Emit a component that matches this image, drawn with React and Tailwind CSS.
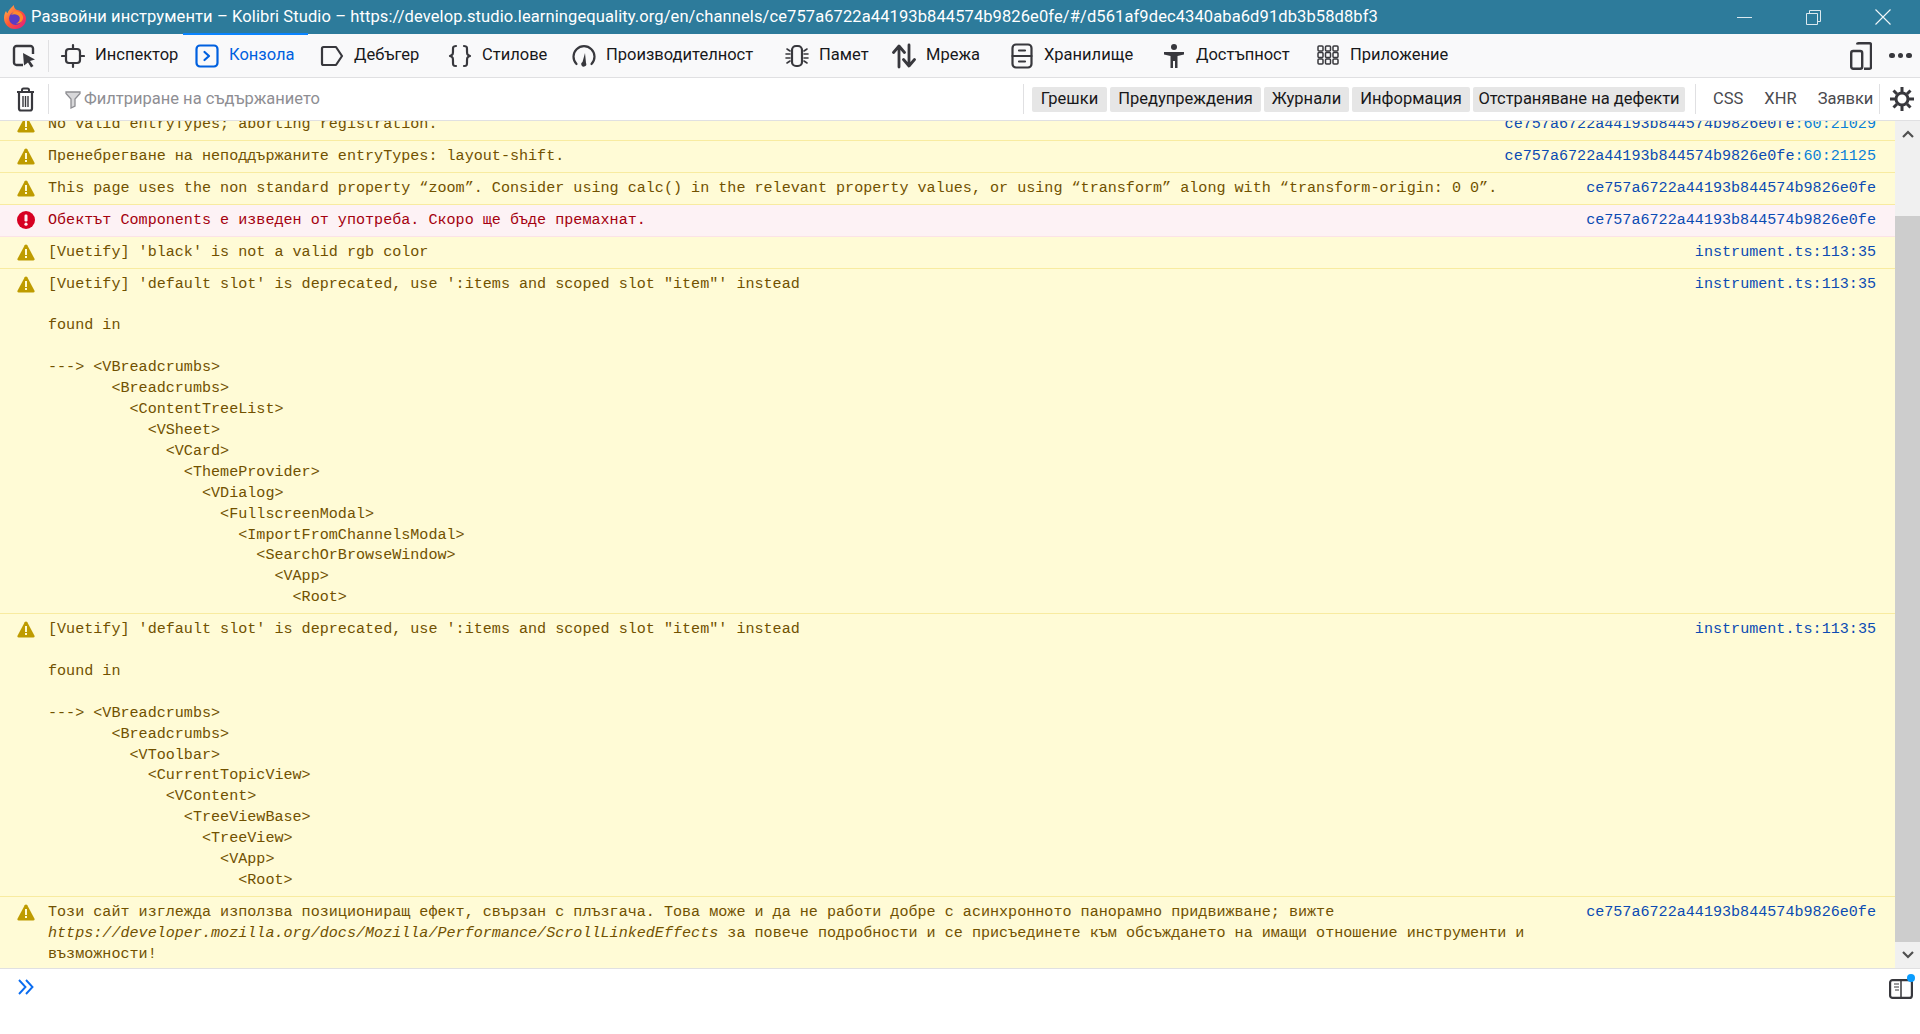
const ui = { fontFamily: 'Roboto, "Noto Sans", sans-serif' }

const tabs = [
  { name: 'Инспектор', icon: 'inspector', w: 'w-[134px]' },
  { name: 'Конзола', icon: 'console', w: 'w-[125px]', active: true },
  { name: 'Дебъгер', icon: 'debugger', w: 'w-[128px]' },
  { name: 'Стилове', icon: 'styles', w: 'w-[124px]' },
  { name: 'Производителност', icon: 'perf', w: 'w-[213px]' },
  { name: 'Памет', icon: 'memory', w: 'w-[107px]' },
  { name: 'Мрежа', icon: 'network', w: 'w-[118px]' },
  { name: 'Хранилище', icon: 'storage', w: 'w-[152px]' },
  { name: 'Достъпност', icon: 'access', w: 'w-[154px]' },
  { name: 'Приложение', icon: 'apps', w: 'w-[163px]' },
]

const levels = [
  { name: 'Грешки', w: 'w-[75px]' },
  { name: 'Предупреждения', w: 'w-[151px]' },
  { name: 'Журнали', w: 'w-[85px]' },
  { name: 'Информация', w: 'w-[118px]' },
  { name: 'Отстраняване на дефекти', w: 'w-[212px]' },
]

const hash = 'ce757a6722a44193b844574b9826e0fe'

const tree1 = `

found in

---> <VBreadcrumbs>
       <Breadcrumbs>
         <ContentTreeList>
           <VSheet>
             <VCard>
               <ThemeProvider>
                 <VDialog>
                   <FullscreenModal>
                     <ImportFromChannelsModal>
                       <SearchOrBrowseWindow>
                         <VApp>
                           <Root>`

const tree2 = `

found in

---> <VBreadcrumbs>
       <Breadcrumbs>
         <VToolbar>
           <CurrentTopicView>
             <VContent>
               <TreeViewBase>
                 <TreeView>
                   <VApp>
                     <Root>`

function TabIcon({ type, color }) {
  const p = { fill: 'none', stroke: color, strokeWidth: 2.2, strokeLinecap: 'round', strokeLinejoin: 'round' }
  return (
    <svg width="24" height="26" viewBox="0 0 24 26" className="shrink-0">
      {type === 'inspector' && (
        <g {...p}>
          <rect x="5" y="6" width="14" height="14" rx="3" />
          <path d="M12 2v4M12 20v4M1 13h4M19 13h4" />
        </g>
      )}
      {type === 'console' && (
        <g {...p}>
          <rect x="1.5" y="2.5" width="21" height="21" rx="3.5" />
          <path d="M9.5 9l4.5 4-4.5 4" />
        </g>
      )}
      {type === 'debugger' && <path {...p} d="M2 5.5a1.5 1.5 0 0 1 1.5-1.5h12.5l6 9-6 9H3.500a1.500 1.500 0 0 1-1.500-1.500z" />}
      {type === 'styles' && (
        <g {...p}>
          <path d="M8 3c-3.500 0-3 2-3 5s0 4-3 5c3 1 3 2 3 5s-.5 5 3 5" />
          <path d="M16 3c3.500 0 3 2 3 5s0 4 3 5c-3 1-3 2-3 5s.5 5-3 5" />
        </g>
      )}
      {type === 'perf' && (
        <g>
          <path {...p} d="M4.500 21a10.500 10.500 0 1 1 15 0" />
          <path d="M13 10l1 10a2.500 2.500 0 1 1-3.500-1z" fill={color} />
        </g>
      )}
      {type === 'memory' && (
        <g {...p}>
          <rect x="7" y="3" width="10" height="20" rx="4" />
          <path strokeWidth="1.600" d="M2 6l3 2M1 11h4M1 15h4M2 20l3-2M22 6l-3 2M23 11h-4M23 15h-4M22 20l-3-2" />
        </g>
      )}
      {type === 'network' && (
        <g {...p} strokeWidth="2.800">
          <path d="M7 24V4M1.500 9.500L7 3l5.500 6.500" />
          <path d="M17 2v20M11.500 16.500L17 23l5.500-6.500" />
        </g>
      )}
      {type === 'storage' && (
        <g {...p}>
          <rect x="2.500" y="1.500" width="19" height="23" rx="3.500" />
          <path d="M2.500 13h19M9 7.500h6M9 18.500h6" />
        </g>
      )}
      {type === 'access' && (
        <g fill={color}>
          <circle cx="12" cy="4" r="3" />
          <path d="M2 9h20v2.600l-6.500 1.400V25h-2.500v-7h-2v7H8.500V13L2 11.600z" />
        </g>
      )}
      {type === 'apps' && (
        <g fill="none" stroke={color} strokeWidth="1.500">
          {[3, 9.500, 16].map((y) =>
            [2, 9.500, 17].map((x) => <rect key={`${x}-${y}`} x={x} y={y} width="5" height="5" rx="1" />),
          )}
        </g>
      )}
    </svg>
  )
}

function FirefoxLogo() {
  return (
    <svg width="24" height="26" viewBox="0 0 24 26" className="shrink-0">
      <defs>
        <linearGradient id="ffo" x1="0" y1="0" x2="1" y2="1">
          <stop offset="0" stopColor="#ffbd4f" />
          <stop offset="0.5" stopColor="#ff5634" />
          <stop offset="1" stopColor="#e31587" />
        </linearGradient>
      </defs>
      <path d="M12 25C5.500 25 1 20 1 14c0-3 1-5.500 2-7 .3 1 .8 1.800 1.400 2.300C5.500 6 8 4 11 1c-.3 2.500 1 4 3 5 4 .5 9 3.500 9 8.500C23 20.500 18.500 25 12 25z" fill="url(#ffo)" />
      <circle cx="12.500" cy="14.500" r="6.500" fill="#5b3bc4" />
      <path d="M8 11c3-1.500 7-1 8.500 2 1 3-1 6-4 6.500 5 .5 8-3 7.500-7-.8-3.500-5-6-9-5z" fill="#ff8a2b" />
    </svg>
  )
}

function WarnIcon() {
  return (
    <svg width="18" height="18" viewBox="0 0 18 18" className="shrink-0">
      <path d="M9 1.500c.6 0 1 .3 1.300.8l7.200 13.500c.4.8-.1 1.700-1.100 1.700H1.600c-1 0-1.500-.9-1.100-1.700L7.700 2.300c.3-.5.7-.8 1.300-.8z" fill="#be9b00" />
      <rect x="8" y="6" width="2" height="6" fill="#fffbd6" />
      <rect x="8" y="13" width="2" height="2" fill="#fffbd6" />
    </svg>
  )
}

function ErrorIcon() {
  return (
    <svg width="18" height="18" viewBox="0 0 18 18" className="shrink-0">
      <circle cx="9" cy="9" r="9" fill="#d70022" />
      <rect x="7.500" y="3.500" width="3" height="7" rx="1.200" fill="#fdf2f5" />
      <circle cx="9" cy="13.200" r="1.600" fill="#fdf2f5" />
    </svg>
  )
}

function Source({ file, line }) {
  return (
    <span className="shrink-0 pl-[16px] text-[#0b4bb3]">
      {file}
      {line && <span className="text-[#0a7fd8]">{line}</span>}
    </span>
  )
}

function Row({ kind = 'warn', file, line, children }) {
  const error = kind === 'error'
  return (
    <div
      className={`flex pl-[17px] pr-[19px] py-[5px] border-b ${
        error ? 'bg-[#fdf2f5] border-[#fbe3e7] text-[#a4000f]' : 'bg-[#fffbd6] border-[#f8eba0] text-[#715100]'
      }`}
    >
      <div className="w-[31px] h-[20.5px] shrink-0 flex items-center">{error ? <ErrorIcon /> : <WarnIcon />}</div>
      <div className="flex-1 whitespace-pre min-w-0">{children}</div>
      <Source file={file} line={line} />
    </div>
  )
}

export default function App() {
  return (
    <div className="h-[1034px] w-[1920px] flex flex-col overflow-hidden bg-white text-[#18181a]" style={ui}>
      {/* window title */}
      <div className="h-[34px] shrink-0 bg-[#2d7b9b] flex items-center pl-[3px] text-white">
        <FirefoxLogo />
        <span className="ml-[4px] text-[16.5px] flex-1 whitespace-nowrap tracking-[0.1px]">
          Развойни инструменти – Kolibri Studio – https://develop.studio.learningequality.org/en/channels/{hash}/#/d561af9dec4340aba6d91db3b58d8bf3
        </span>
        <div className="flex items-center pr-[29px] gap-[54px]">
          <span className="block w-[15px] h-px bg-[#dce9ef]" />
          <svg width="15" height="15" viewBox="0 0 15 15" fill="none" stroke="#dce9ef">
            <path d="M.5 3.500h11v11H.5zM3.500 3.500v-3h11v11h-3" />
          </svg>
          <svg width="16" height="16" viewBox="0 0 16 16" stroke="#f2f7f9" strokeWidth="1.100">
            <path d="M.5.5l15 15M15.500.5l-15 15" />
          </svg>
        </div>
      </div>

      {/* tool tabs */}
      <div className="h-[44px] shrink-0 bg-[#f9f9fa] border-b border-[#e0e0e2] flex items-center text-[16.500px]">
        <div className="w-[49px] h-[32px] border-r border-[#e0e0e2] flex items-center pl-[12px]">
          <svg width="25" height="24" viewBox="0 0 25 24" fill="none">
            <path d="M11 21H4.500A2.500 2.500 0 0 1 2 18.500v-14A2.500 2.500 0 0 1 4.500 2h14A2.500 2.500 0 0 1 21 4.500V10" stroke="#38383d" strokeWidth="2.400" />
            <path d="M11 9l12 6.500-5 1.500 3.500 5-2.500 1.500-3-5-4 3z" fill="#38383d" />
          </svg>
        </div>
        {tabs.map((t) => (
          <div key={t.name} className={`relative h-full flex items-center gap-[10px] pl-[12px] ${t.w} ${t.active ? 'text-[#0060df]' : ''}`}>
            {t.active && <span className="absolute left-0 right-0 -top-px h-[2px] bg-[#0a84ff]" />}
            <TabIcon type={t.icon} color={t.active ? '#0060df' : '#38383d'} />
            <span className="whitespace-nowrap">{t.name}</span>
          </div>
        ))}
        <div className="ml-auto flex items-center pr-[8px] gap-[17px]">
          <svg width="22" height="28" viewBox="0 0 22 28" fill="none" stroke="#38383d" strokeWidth="2.400">
            <path d="M7 2.500a1.500 1.500 0 0 1 1.500-1.300h11a1.500 1.500 0 0 1 1.500 1.500v22.500a1.500 1.500 0 0 1-1.500 1.500H14" />
            <rect x="1.200" y="9" width="11" height="17.800" rx="2" />
          </svg>
          <span className="flex gap-[3px] w-[23px]">
            <i className="block w-[5.500px] h-[5.500px] rounded-full bg-[#38383d]" />
            <i className="block w-[5.500px] h-[5.500px] rounded-full bg-[#38383d]" />
            <i className="block w-[5.500px] h-[5.500px] rounded-full bg-[#38383d]" />
          </span>
        </div>
      </div>

      {/* filter bar */}
      <div className="h-[43px] shrink-0 border-b border-[#e0e0e2] flex items-center text-[16.500px]">
        <div className="w-[49px] h-[30px] border-r border-[#e0e0e2] flex items-center pl-[16px]">
          <svg width="19" height="25" viewBox="0 0 19 25" fill="none" stroke="#38383d" strokeWidth="2">
            <path d="M1 5h17M6 4.500V3a1.500 1.500 0 0 1 1.500-1.500h4A1.500 1.500 0 0 1 13 3v1.500" />
            <path d="M3 5h13v16.500a2 2 0 0 1-2 2H5a2 2 0 0 1-2-2z" strokeWidth="2.200" />
            <path d="M7 9v11M9.500 9v11M12 9v11" strokeWidth="1.400" />
          </svg>
        </div>
        <div className="flex-1 flex items-center pl-[16px] gap-[3px] text-[#8e8e93]">
          <svg width="16" height="19" viewBox="0 0 16 19" fill="none" stroke="#8e8e93" strokeWidth="1.300">
            <path d="M1 2h14v1.500L10 9v7l-4 2V9L1 3.500z" fill="#d8d8da" />
          </svg>
          <span>Филтриране на съдържанието</span>
        </div>
        <div className="h-[30px] border-l border-[#e0e0e2] pl-[8px] pr-[10px] flex items-center gap-[3px] text-[#18181a]">
          {levels.map((l) => (
            <span key={l.name} className={`h-[25px] ${l.w} rounded-[2px] bg-[#e6e6e6] flex items-center justify-center whitespace-nowrap`}>
              {l.name}
            </span>
          ))}
        </div>
        <div className="h-[30px] border-l border-[#e0e0e2] w-[184px] flex items-center pl-[17px] gap-[21px] text-[#4a4a4f]">
          <span>CSS</span>
          <span>XHR</span>
          <span>Заявки</span>
        </div>
        <div className="h-[30px] w-[41px] border-l border-[#e0e0e2] flex items-center pl-[10px]">
          <svg width="24" height="24" viewBox="0 0 24 24" fill="none" stroke="#38383d">
            <circle cx="12" cy="12" r="6" strokeWidth="3" />
            <path strokeWidth="3" d="M12 0v5M12 19v5M0 12h5M19 12h5M3.500 3.500L7 7M17 17l3.500 3.500M20.500 3.500L17 7M7 17l-3.500 3.500" />
          </svg>
        </div>
      </div>

      {/* messages */}
      <div className="h-[848px] shrink-0 flex border-b border-[#e0e0e2]">
        <div
          className="flex-1 min-w-0 overflow-hidden bg-[#fffbd6] text-[15.100px] leading-[20.900px]"
          style={{ fontFamily: '"Liberation Mono", "DejaVu Sans Mono", monospace' }}
        >
          <div className="h-[20px] overflow-hidden flex flex-col justify-end">
            <Row file={hash} line=":60:21029">No valid entryTypes; aborting registration.</Row>
          </div>
          <Row file={hash} line=":60:21125">Пренебрегване на неподдържаните entryTypes: layout-shift.</Row>
          <Row file={hash}>This page uses the non standard property “zoom”. Consider using calc() in the relevant property values, or using “transform” along with “transform-origin: 0 0”.</Row>
          <Row kind="error" file={hash}>Обектът Components е изведен от употреба. Скоро ще бъде премахнат.</Row>
          <Row file="instrument.ts:113:35">[Vuetify] 'black' is not a valid rgb color</Row>
          <Row file="instrument.ts:113:35">{`[Vuetify] 'default slot' is deprecated, use ':items and scoped slot "item"' instead${tree1}`}</Row>
          <Row file="instrument.ts:113:35">{`[Vuetify] 'default slot' is deprecated, use ':items and scoped slot "item"' instead${tree2}`}</Row>
          <Row file={hash}>
            {'Този сайт изглежда използва позициониращ ефект, свързан с плъзгача. Това може и да не работи добре с асинхронното панорамно придвижване; вижте\n'}
            <i>https://developer.mozilla.org/docs/Mozilla/Performance/ScrollLinkedEffects</i>
            {' за повече подробности и се присъединете към обсъждането на имащи отношение инструменти и\nвъзможности!'}
          </Row>
        </div>

        {/* scrollbar */}
        <div className="w-[25px] shrink-0 bg-[#f0f0f0] flex flex-col">
          <div className="h-[25px] flex items-center justify-center">
            <svg width="12" height="8" viewBox="0 0 12 8" fill="none" stroke="#505050" strokeWidth="2.200">
              <path d="M1 7l5-5 5 5" />
            </svg>
          </div>
          <div className="mt-[70px] h-[726px] bg-[#cdcdcd]" />
          <div className="mt-auto h-[26px] flex items-center justify-center">
            <svg width="12" height="8" viewBox="0 0 12 8" fill="none" stroke="#505050" strokeWidth="2.200">
              <path d="M1 1l5 5 5-5" />
            </svg>
          </div>
        </div>
      </div>

      {/* input */}
      <div className="flex-1 flex items-start justify-between pl-[18px] pr-[7px]">
        <svg width="16" height="16" viewBox="0 0 16 16" fill="none" stroke="#0a6cf0" strokeWidth="1.900" className="mt-[10px]">
          <path d="M1 1l6.500 7L1 15M8 1l6.500 7L8 15" />
        </svg>
        <div className="relative mt-[10px]">
          <svg width="24" height="20" viewBox="0 0 24 20" fill="none" stroke="#38383d">
            <rect x="1.100" y="1.100" width="21.800" height="17.800" rx="2.500" strokeWidth="2.200" />
            <path d="M12 2v16" strokeWidth="1.500" />
            <path d="M5 5h5M5 8h5M6 11h4" strokeWidth="1.200" />
          </svg>
          <span className="absolute -right-[2px] -top-[5px] w-[8px] h-[8px] rounded-full bg-[#0a9dff]" />
        </div>
      </div>
    </div>
  )
}
